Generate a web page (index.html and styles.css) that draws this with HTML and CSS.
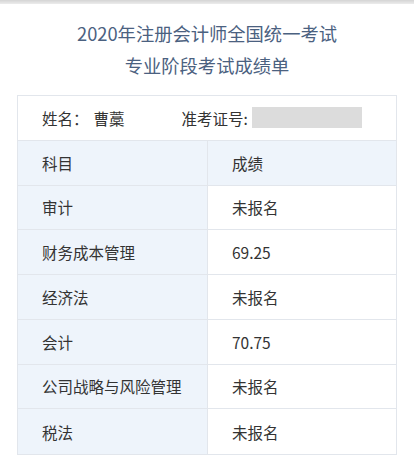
FILE: index.html
```html
<!DOCTYPE html>
<html lang="zh-CN">
<head>
<meta charset="utf-8">
<link rel="stylesheet" href="styles.css">
</head>
<body>
<div class="topbar"></div>
<header class="title">
  <div>2020年注册会计师全国统一考试</div>
  <div>专业阶段考试成绩单</div>
</header>
<div class="sheet">
  <div class="info">
    <span class="label">姓名：</span><span class="name">曹藁</span>
    <span class="label idlabel">准考证号:</span><span class="mask"></span>
  </div>
  <div class="cell head">科目</div><div class="cell head right">成绩</div>
  <div class="cell">审计</div><div class="cell right">未报名</div>
  <div class="cell">财务成本管理</div><div class="cell right">69.25</div>
  <div class="cell">经济法</div><div class="cell right">未报名</div>
  <div class="cell">会计</div><div class="cell right">70.75</div>
  <div class="cell">公司战略与风险管理</div><div class="cell right">未报名</div>
  <div class="cell last">税法</div><div class="cell right last">未报名</div>
</div>
</body>
</html>
```
FILE: styles.css
```css
html, body { margin: 0; padding: 0; background: #fff; }
body {
  font-family: "Noto Sans CJK SC", "Noto Sans", sans-serif;
  color: #333;
  width: 414px;
}
.topbar {
  height: 4px;
  background: linear-gradient(#d4d4d4, #ececec);
}
.title {
  margin-top: 13px;
  text-align: center;
  font-size: 18.3px;
  line-height: 32px;
  color: #4b6180;
}
.sheet {
  margin: 14px 17px 0;
  display: grid;
  grid-template-columns: 1fr 1fr;
  border: 1px solid #e2e6ec;
  font-size: 15.5px;
}
.info {
  grid-column: 1 / 3;
  height: 44.75px;
  box-sizing: border-box;
  border-bottom: 1px solid #e2e6ec;
  display: flex;
  align-items: center;
  padding-left: 24px;
  background: #fff;
}
.name { margin-left: 5px; }
.idlabel { margin-left: 57px; }
.mask {
  display: inline-block;
  width: 110px;
  height: 21px;
  margin-left: 4px;
  background: #dcdcdc;
}
.cell {
  height: 44.75px;
  box-sizing: border-box;
  display: flex;
  align-items: center;
  padding-left: 24px;
  background: #eef4fb;
  border-bottom: 1px solid #e2e6ec;
}
.cell.right {
  background: #fff;
  border-left: 1px solid #e2e6ec;
}
.cell.head, .cell.head.right { background: #eef4fb; }
.cell.last { border-bottom: none; }
```
